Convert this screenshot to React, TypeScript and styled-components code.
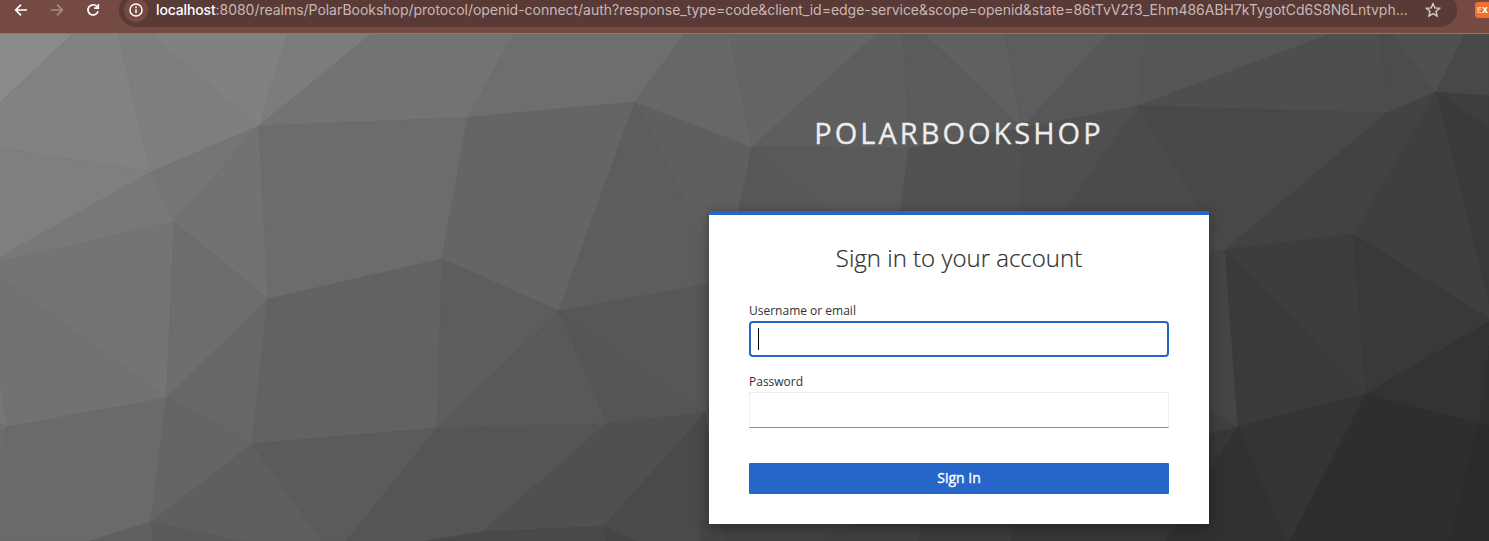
import React from "react";
import styled, { createGlobalStyle } from "styled-components";

const GlobalStyle = createGlobalStyle`
  *, *::before, *::after { box-sizing: border-box; }
  html, body { margin: 0; padding: 0; overflow: hidden; }
  body { font-family: "Open Sans", sans-serif; color: #3a3a3a; }
`;

const Window = styled.div`
  display: flex;
  flex-direction: column;
  width: 1489px;
  height: 541px;
  overflow: hidden;
`;

const Toolbar = styled.header`
  display: flex;
  align-items: flex-start;
  flex: none;
  height: 34px;
  overflow: hidden;
  background: #754a42;
  border-bottom: 1px solid #91756d;
`;

const NavButtons = styled.nav`
  display: flex;
  align-items: center;
  flex: none;
  gap: 20px;
  height: 20px;
  width: 119px;
  padding-left: 13px;
`;

const NavIcon = styled.svg<{ $dim?: boolean }>`
  flex: none;
  width: 16px;
  height: 16px;
  fill: none;
  stroke: ${(p) => (p.$dim ? "#a88a84" : "#ffffff")};
  stroke-width: 1.7;
`;

const AddressBar = styled.div`
  display: flex;
  align-items: center;
  flex: none;
  width: 1338px;
  height: 34px;
  margin-top: -7px;
  padding: 0 16px 0 5px;
  border-radius: 17px;
  background: #593a37;
`;

const SiteInfo = styled.span`
  display: grid;
  place-items: center;
  flex: none;
  width: 24px;
  height: 24px;
  margin-right: 8px;
  border-radius: 50%;
  background: #754a42;
`;

const Url = styled.span`
  flex: 1;
  min-width: 0;
  font: 400 14px/20px Inter, sans-serif;
  letter-spacing: -0.025px;
  white-space: nowrap;
  color: #c8b8b5;
`;

const Host = styled.span`
  color: #ffffff;
  font-weight: 500;
  letter-spacing: -0.15px;
`;

const Extension = styled.span`
  display: flex;
  align-items: center;
  flex: none;
  width: 24px;
  height: 16px;
  margin: 2px 0 0 18px;
  padding-left: 2px;
  border-radius: 3px;
  background: #ef6f2e;
  color: #fff;
  font: 800 8px/16px Inter, sans-serif;
`;

const FadedLetter = styled.span`
  color: #f9c3a6;
`;

const Page = styled.main`
  position: relative;
  flex: 1;
  display: flex;
  flex-direction: column;
  padding-left: 709px;
  background: #555;
`;

const Backdrop = styled.svg`
  position: absolute;
  inset: 0;
  width: 1489px;
  height: 507px;
`;

const Realm = styled.h1`
  position: relative;
  width: 500px;
  height: 177px;
  margin: 0;
  padding-top: 79px;
  font-size: 29px;
  line-height: 40px;
  font-weight: 400;
  letter-spacing: 3px;
  text-align: center;
  text-transform: uppercase;
  color: #ededed;
  -webkit-text-stroke: 0.3px #ededed;
`;

const Card = styled.section`
  position: relative;
  display: flex;
  flex-direction: column;
  width: 500px;
  height: 313px;
  padding: 0 40px;
  border-top: 4px solid #2566c8;
  background: #fff;
  box-shadow: 0 5px 14px rgba(0, 0, 0, 0.28), 0 0 6px rgba(0, 0, 0, 0.12);
`;

const Title = styled.h2`
  margin: 26px 0 27px;
  font-size: 24px;
  line-height: 34px;
  font-weight: 300;
  text-align: center;
  color: #303030;
  -webkit-text-stroke: 0.2px #303030;
`;

const Field = styled.div`
  display: flex;
  flex-direction: column;
  margin-bottom: 16px;
`;

const Label = styled.label`
  height: 19px;
  font-size: 12px;
  line-height: 18px;
  color: #303030;
`;

const TextBox = styled.div<{ $focused?: boolean }>`
  display: flex;
  align-items: center;
  height: 36px;
  padding-left: ${(p) => (p.$focused ? 7 : 8)}px;
  border: ${(p) => (p.$focused ? "2px solid #2563c4" : "1px solid #ededed")};
  border-bottom-color: ${(p) => (p.$focused ? "#2563c4" : "#8a8d90")};
  border-radius: ${(p) => (p.$focused ? 4 : 0)}px;
  background: #fff;
`;

const Caret = styled.span`
  width: 1px;
  height: 22px;
  background: #000;
`;

const Submit = styled.button`
  height: 31px;
  margin-top: 19px;
  padding: 0 0 2px;
  border: 0;
  border-radius: 1px;
  background: #2566c8;
  color: #fff;
  font: 500 14px/29px "Open Sans", sans-serif;
  -webkit-text-stroke: 0.35px #fff;
`;

/* Mesh vertices, in window coordinates. */
const V: Record<string, [number, number]> = {
  a: [151, 172], b: [259, 126], c: [468, 117.5], d: [174, 222], e: [268, 299],
  f: [166.5, 398], g: [442, 259], h: [635, 102], i: [752, 147], j: [559, 311],
  k: [724, 281], l: [909, 148.5], m: [437, 428], n: [607, 423], o: [705, 413],
  p: [252.5, 444], q: [151, 522], r: [6, 427], s: [482, 532], t: [604, 526],
  u: [1022, 128], v: [1138, 106], w: [1387, 113], x: [1436, 92], y: [1353, 234],
  z: [1225, 250], A: [1365.5, 394], B: [1238, 427], C: [1492, 320], D: [1478, 423],
};

/* Each facet: its tone, then its corners as vertex names or "x,y" pairs. */
const FACETS: [string, string][] = [
  ["#8a8a8a", "0,30 77,30 0,103"],
  ["#828282", "77,30 117,30 a 0,148 0,103"],
  ["#7e7e7e", "117,30 145,30 b a"],
  ["#818181", "145,30 289,30 b"],
  ["#7c7c7c", "289,30 376,30 b"],
  ["#737373", "376,30 516,30 c b"],
  ["#7f7f7f", "0,148 a 0,257"],
  ["#787878", "0,257 a d 0,262"],
  ["#757575", "a b d"],
  ["#727272", "b e d"],
  ["#6c6c6c", "b c g e"],
  ["#747474", "0,262 d f 0,277"],
  ["#727272", "0,277 f r 0,380"],
  ["#777777", "0,380 r 0,424"],
  ["#707070", "0,424 r 0,432"],
  ["#6d6d6d", "0,432 r 0,469"],
  ["#6d6d6d", "d e f"],
  ["#6a6a6a", "r f q 90,541 0,541 0,469"],
  ["#676767", "e p f"],
  ["#656565", "f p q"],
  ["#626262", "e g m p"],
  ["#6e6e6e", "516,30 687,30 h c"],
  ["#656565", "c h j g"],
  ["#5d5d5d", "g j m"],
  ["#5d5d5d", "h k j"],
  ["#5f5f5f", "h i k"],
  ["#676767", "687,30 729,30 i h"],
  ["#656565", "729,30 881,30 i"],
  ["#606060", "90,541 q 153,541"],
  ["#5a5a5a", "153,541 q 245,541"],
  ["#5f5f5f", "q p 322,541 245,541"],
  ["#5b5b5b", "p m 346,541 322,541"],
  ["#555555", "346,541 m s 427,541"],
  ["#555555", "m n s"],
  ["#595959", "m j n"],
  ["#555555", "j o n"],
  ["#575757", "j k o"],
  ["#505050", "s n t"],
  ["#505050", "n o t"],
  ["#494949", "427,541 s 478,541"],
  ["#494949", "478,541 s t 606,541"],
  ["#454545", "606,541 t 636,541"],
  ["#4a4a4a", "t o 724,524 724,541 636,541"],
  ["#5e5e5e", "881,30 903,30 l i"],
  ["#5b5b5b", "903,30 921,30 u l"],
  ["#606060", "921,30 1004,30 u"],
  ["#5d5d5d", "1004,30 1112,30 u"],
  ["#575757", "1112,30 1146,30 v u"],
  ["#555555", "1146,30 1342,30 v"],
  ["#595959", "i l 900,216 832,216"],
  ["#575757", "i 832,216 k"],
  ["#515151", "l u 1021,216 900,216"],
  ["#4f4f4f", "u v 1060,216 1021,216"],
  ["#4b4b4b", "1060,216 v z 1209,253 1060,253"],
  ["#4e4e4e", "1342,30 1381,30 w v"],
  ["#4c4c4c", "1381,30 1390,30 x w"],
  ["#505050", "1390,30 1467,30 x"],
  ["#484848", "1467,30 1489,30 1489,96 x"],
  ["#3e3e3e", "x 1489,96 1489,128"],
  ["#3a3a3a", "x 1489,128 1489,304 C"],
  ["#484848", "v w z"],
  ["#424242", "w y z"],
  ["#434343", "w x y"],
  ["#3f3f3f", "x C y"],
  ["#3d3d3d", "z y A"],
  ["#393939", "y C A"],
  ["#454545", "1200,253 z B 1200,405"],
  ["#3f3f3f", "1200,405 B 1200,436"],
  ["#3a3a3a", "z A B"],
  ["#373737", "1200,436 B 1200,485"],
  ["#343434", "B A 1290,541 1285,541"],
  ["#313131", "1200,485 B 1285,541 1165,541"],
  ["#333333", "A C D"],
  ["#303030", "1489,345 1489,426 D"],
  ["#2e2e2e", "A D 1450,541 1290,541"],
  ["#2b2b2b", "D 1489,426 1489,541 1450,541"],
  ["#454545", "700,520 724,520 724,541 700,541"],
  ["#434343", "724,520 862,520 820,541 724,541"],
  ["#404040", "862,520 923,520 919,541 820,541"],
  ["#3c3c3c", "923,520 1016,520 1011,541 919,541"],
  ["#373737", "1016,520 1180,520 1165,541 1011,541"],
];

const corners = (list: string) =>
  list
    .split(" ")
    .map((c) => (V[c] ? V[c].join(",") : c))
    .join(" ");

export default function App() {
  return (
    <Window>
      <GlobalStyle />
      <Toolbar>
        <NavButtons>
          <NavIcon viewBox="0 0 16 16">
            <path d="M14 8H3M8 2.7 2.7 8 8 13.3" />
          </NavIcon>
          <NavIcon viewBox="0 0 16 16" $dim>
            <path d="M2 8h11M8 2.7 13.3 8 8 13.3" />
          </NavIcon>
          <NavIcon viewBox="0 0 16 16">
            <path d="M13 9.2A5.1 5.1 0 1 1 11.9 4.5L13 5.6" />
            <path d="M13.3 2v4.2H9.1" />
          </NavIcon>
        </NavButtons>
        <AddressBar>
          <SiteInfo>
            <NavIcon viewBox="0 0 16 16">
              <circle cx="8" cy="8" r="6" strokeWidth="1.5" />
              <path d="M8 7.2v4M8 4.6v1.6" strokeWidth="1.5" />
            </NavIcon>
          </SiteInfo>
          <Url>
            <Host>localhost</Host>
            :8080/realms/PolarBookshop/protocol/openid-connect/auth?response_type=code&amp;client_id=edge-service&amp;scope=openid&amp;state=86tTvV2f3_Ehm486ABH7kTygotCd6S8N6Lntvph...
          </Url>
          <NavIcon viewBox="0 0 16 16">
            <path
              d="M8 1.7 9.8 5.9l4.8.4-3.6 3.1 1.1 4.7L8 11.6l-4.1 2.5L5 9.4 1.400 6.300l4.800-.4Z"
              stroke="#d5cbc9"
              strokeWidth="1.4"
            />
          </NavIcon>
        </AddressBar>
        <Extension>
          <FadedLetter>E</FadedLetter>X
        </Extension>
      </Toolbar>
      <Page>
        <Backdrop viewBox="0 34 1489 507" aria-hidden>
          {FACETS.map(([tone, list], index) => (
            <polygon key={index} points={corners(list)} fill={tone} stroke={tone} strokeWidth="0.6" />
          ))}
        </Backdrop>
        <Realm>PolarBookshop</Realm>
        <Card>
          <Title>Sign in to your account</Title>
          <Field>
            <Label>Username or email</Label>
            <TextBox $focused>
              <Caret />
            </TextBox>
          </Field>
          <Field>
            <Label>Password</Label>
            <TextBox />
          </Field>
          <Submit>Sign In</Submit>
        </Card>
      </Page>
    </Window>
  );
}
